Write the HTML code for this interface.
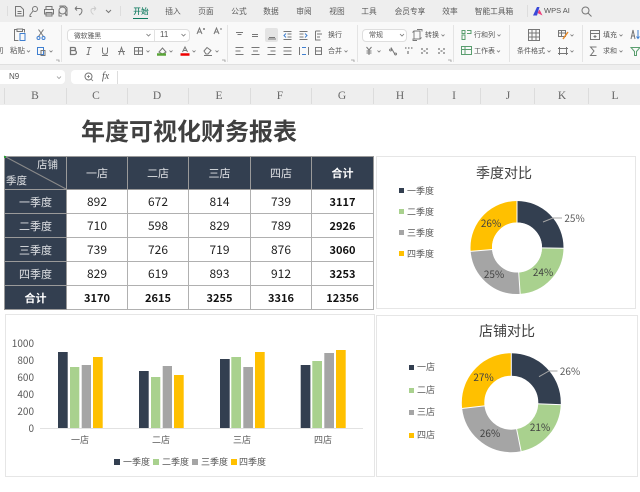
<!DOCTYPE html>
<html><head><meta charset="utf-8">
<style>
html,body{margin:0;padding:0;background:#fff}
body{width:640px;height:492px;overflow:hidden;position:relative;font-family:"Liberation Sans","Noto Sans CJK SC",sans-serif}
.a{position:absolute}
.t{position:absolute;font-family:"Noto Sans CJK SC",sans-serif;white-space:nowrap;line-height:12px;color:#555;font-size:7.5px}
.c{transform:translateX(-50%)}
.tab{top:5.5px;font-size:7.7px;color:#5a5a5a}
.cap{position:absolute;top:88px;height:16px;font:11.5px/17px "Liberation Serif",serif;color:#666;transform:translateX(-50%)}
.v{position:absolute;top:88px;height:16px;width:1px;background:#dcdcdc}
.s{position:absolute;width:1px;top:25px;height:37px;background:#e4e4e4}
table{position:absolute;left:4px;top:156px;border-collapse:collapse;table-layout:fixed;width:369px;font-family:"Noto Sans CJK SC",sans-serif;font-size:12px;color:#222}
td{border:1px solid #b0b0b0;text-align:center;padding:0;height:23px;line-height:14px;background:#fff}
td.h{background:#333f50;color:#dfe1e4;font-size:11px;border-color:#9a9a9a}
td.b{font-weight:700;color:#111;font-size:11px}
td.hb{background:#333f50;color:#fff;font-weight:700;font-size:11px;border-color:#9a9a9a}
.sq{position:absolute}
.lg{font-size:9px;color:#595959;line-height:12px}
.ax{font-size:10px;color:#595959}
.p{font-size:10px;color:#404040}
.box{position:absolute;border:1px solid #e6e6e6;background:#fff;box-sizing:border-box}
svg{position:absolute;overflow:visible}
</style></head><body>

<div class="a" style="left:0;top:0;width:640px;height:22px;background:#eeeeee"></div>
<div class="a" style="left:0;top:22px;width:640px;height:43px;background:#f9f9f9;border-bottom:1px solid #e0e0e0;box-sizing:border-box"></div>
<div class="a" style="left:0;top:65px;width:640px;height:40px;background:#eeeeee"></div>
<div class="a" style="left:0;top:70px;width:65px;height:14px;background:#fff;border-radius:0 4px 4px 0"></div>
<div class="a" style="left:71px;top:70px;width:569px;height:14px;background:#fff;border-radius:4px 0 0 4px"></div>

<!-- quick access icons -->
<svg style="left:0;top:0" width="130" height="22" fill="none" stroke="#777" stroke-width="1">
<path d="M7.5 6v10M120.5 6v10" stroke="#ddd"/>
<path d="M15.5 6.5h5l3 3v6.5h-8zM17.5 11.5h4M17.5 13.5h4"/>
<circle cx="35" cy="9" r="2.5"/><path d="M33 11l-3 4v1.5h1.5"/>
<path d="M46 9V6.5h6V9M44.5 9.5h9v4.500h-9zM46 12.5h6v3.500h-6z"/>
<circle cx="62.5" cy="10.5" r="3.5"/><path d="M60 7V6h5l2 2v7h-2M59 10v6h3M65 13l2 3"/>
<path d="M75 8.5h5c3 0 2.500 5-1 6.500M75 8.5l2-2M75 8.500l2 2"/>
<path d="M96 8.5h-3c-3 0-2.500 4 .5 6M96 8.500l-2-2M96 8.500l-2 2" stroke="#ccc"/>
<path d="M106 10l2.500 2.500 2.500-2.500" stroke="#777"/>
</svg>

<!-- tabs -->
<span class="t tab c" style="left:141px;color:#0f7a5f;font-weight:500">开始</span>
<div class="a" style="left:133px;top:17.500px;width:15px;height:1.500px;background:#0f7a5f"></div>
<span class="t tab c" style="left:173px">插入</span>
<span class="t tab c" style="left:206px">页面</span>
<span class="t tab c" style="left:239px">公式</span>
<span class="t tab c" style="left:271px">数据</span>
<span class="t tab c" style="left:304px">审阅</span>
<span class="t tab c" style="left:337px">视图</span>
<span class="t tab c" style="left:369px">工具</span>
<span class="t tab c" style="left:410px">会员专享</span>
<span class="t tab c" style="left:450px">效率</span>
<span class="t tab c" style="left:494px">智能工具箱</span>
<div class="a" style="left:527px;top:5px;width:1px;height:12px;background:#ddd"></div>
<svg style="left:532px;top:5px" width="12" height="12"><path d="M1 10.500L5 2h2.500L5 10.500z" fill="#3a49d8"/><path d="M5.500 8l2-3.500 3 6z" fill="#ee3f7a"/></svg>
<span class="t" style="left:544px;top:5px;font-size:7.500px;font-family:'Liberation Sans',sans-serif">WPS AI</span>
<svg style="left:580px;top:5px" width="14" height="14" fill="none" stroke="#777"><circle cx="5.500" cy="5.500" r="3.500"/><path d="M8 8l3.500 3.500"/></svg>

<!-- ribbon separators -->
<div class="s" style="left:61px"></div><div class="s" style="left:227px"></div><div class="s" style="left:357px"></div><div class="s" style="left:453px"></div><div class="s" style="left:509px"></div><div class="s" style="left:582px"></div>

<!-- font & number boxes -->
<div class="a" style="left:66.500px;top:28.500px;width:123px;height:13px;background:#fff;border:1px solid #dedede;border-radius:4px;box-sizing:border-box"></div>
<div class="a" style="left:154px;top:29px;width:1px;height:12px;background:#e2e2e2"></div>
<div class="a" style="left:265px;top:28px;width:13px;height:14px;background:#e4e4e4;border-radius:2px"></div>
<div class="a" style="left:362px;top:28.500px;width:45px;height:13px;background:#fff;border:1px solid #dedede;border-radius:4px;box-sizing:border-box"></div>

<span class="t" style="left:-4px;top:45px">切</span>
<span class="t" style="left:10px;top:45px">粘贴</span>
<span class="t" style="left:74px;top:29px;font-size:6.800px">微软雅黑</span>
<span class="t" style="left:160px;top:29px;font-family:'Liberation Sans',sans-serif;font-size:8px">11</span>
<span class="t" style="left:328px;top:29px;font-size:7px">换行</span>
<span class="t" style="left:328px;top:45px;font-size:7px">合并</span>
<span class="t" style="left:369px;top:29px;font-size:7px">常规</span>
<span class="t" style="left:425px;top:29px;font-size:7px">转换</span>
<span class="t" style="left:474px;top:29px;font-size:7px">行和列</span>
<span class="t" style="left:474px;top:45px;font-size:7px">工作表</span>
<span class="t" style="left:517px;top:45px;font-size:7px">条件格式</span>
<span class="t" style="left:603px;top:29px;font-size:7px">填充</span>
<span class="t" style="left:603px;top:45px;font-size:7px">求和</span>

<svg style="left:0;top:0" width="640" height="65" fill="none" stroke="#777" stroke-width="1">
<!-- paste / cut / copy -->
<path d="M17 29.500h-2.500v11h4M22.500 29.500h2v3M17 31.500v-2.500h5.500v2.500z"/><rect x="20" y="33.500" width="5" height="7" stroke="#3f7fd0"/>
<path d="M38.500 29.500l5 7M43.500 29.500l-5 7"/><circle cx="38.500" cy="38" r="1.500" stroke="#3f7fd0"/><circle cx="43.500" cy="38" r="1.500" stroke="#3f7fd0"/>
<rect x="37.500" y="47.500" width="6" height="7" stroke="#3f7fd0"/><path d="M41 50.500h4v5h-4z"/>
<!-- font row 2 -->
<path d="M70.500 47.500h3.500c2 0 2 3 0 3h-3.500zM70.500 50.500h4c2.500 0 2.500 4 0 4h-4z" stroke-width="1.300"/>
<path d="M87 47.500h4.500M89.500 47.500l-1.500 7M86.500 54.500h3"/>
<path d="M102.500 47.500v4c0 3.500 5 3.500 5 0v-4M102 55.500h6"/>
<path d="M118 51.500h7M119 55l2.500-7.500 2.500 7.500"/>
<rect x="134.500" y="47.500" width="8" height="7"/><path d="M138.500 47.500v7M134.500 51h8"/>
<path d="M159 52l3.500-4 3.500 4-3.500 2z"/><path d="M157 54.500h9" stroke="#5aa538" stroke-width="2.500"/>
<path d="M182.500 52l2.500-5 2.500 5M183.500 50.500h3"/><path d="M180.500 54.500h9" stroke="#e00" stroke-width="2.500"/>
<path d="M204 51l3-3.500 4 3-3 3.500h-2zM204 55.500h8"/>
<path d="M197 34l2.500-6 2.500 6M198 32h3M203 29h2M204 28v2"/>
<path d="M214 34l2.500-6 2.500 6M215 32h3M220 29h2"/>
<!-- align -->
<path d="M236 32.500h7M237.500 34.500h4M252 34.500h6M252 36.500h6M269 37.500h6M268 39h8"/>
<path d="M283.500 31.500h8M283.500 39.500h8M287.500 34h4M287.500 37h4"/><path d="M286 33.500l-2 2 2 2" stroke="#3f7fd0"/>
<path d="M299.500 31.500h8M299.500 39.500h8M299.500 34h4M299.500 37h4"/><path d="M305 33.500l2 2-2 2" stroke="#3f7fd0"/>
<path d="M315.500 31h5M315.500 31v9h5M317 34h5M317 37h3"/>
<path d="M235.500 47.500h8M235.500 51h5M235.500 54.500h8M251.500 47.500h8M253 51h5M251.500 54.500h8M267.500 47.500h8M270.500 51h5M267.500 54.500h8M283.500 47.500h8M283.500 51h8M283.500 54.500h8"/>
<path d="M299.500 47v8M308.500 47v8"/><path d="M302 47.500h4M302 54.500h4" stroke="#3f7fd0"/>
<rect x="315.500" y="47.500" width="6" height="7"/><path d="M315.500 51h6"/>
<!-- number -->
<path d="M414 31h6v8h-6zM414 31l-1.500 1.500M420 39l1.500-1.500M417 29.500h5v2M417 40.500h-4v-2" stroke-width=".9"/>
<path d="M366.500 47l2.500 3 2.500-3M369 50v5M366.500 51h5M366.500 53h5"/>
<path d="M391 47.500l4 7M390.500 49a1 1 0 1 0 .1 0M395.500 53a1 1 0 1 0 .1 0"/>
<path d="M405 48h1.500M408 48h1.500M411 48h1.500M408 51v3" stroke-width="1.200"/>
<path d="M421 49h2M426 49h2M421 53h2M426 53h2M423.500 51h2" stroke-width="1.200"/>
<path d="M438 49h2M443 49h2M438 53h2M443 53h2M440.500 51h2" stroke-width="1.200"/>
<!-- rows/cols -->
<path d="M462 30.500h3v3h-3zM467 30.500h4v3h-4M462 35v4.500h3v-4.500z" stroke="#5a9e6f"/>
<path d="M461.500 46.500h10v8h-10zM461.500 49.500h10M465 46.500v8" stroke="#5a9e6f"/>
<!-- conditional -->
<path d="M528.500 29.500h11v11h-11zM528.500 33h11M528.500 37h11M532 29.500v11M536 29.500v11"/>
<path d="M558.500 30.500h7v6h-7zM558.500 33h7M561.500 30.500v6"/><path d="M563 39l5-7" stroke="#e88a2a" stroke-width="1.500"/>
<path d="M559.500 47v8M566.500 47v8M558 48.500h10M558 53.500h10"/>
<!-- fill, sum, sort, filter -->
<path d="M590.500 30.500h9v9h-9zM590.500 33.500h9M595 35v3M593.500 36.500h3"/>
<path d="M594.500 47h-6l3.500 4-3.500 4.500h6" transform="translate(2 0)"/>
<path d="M631 39l2-9 2 9M635 36h-3"/><path d="M638 30v8M636.500 36.500l1.500 2 1.500-2" stroke="#3f7fd0"/>
<path d="M631 47.500h9l-3.500 4v4h-2v-4z" stroke="#5a9e6f"/>
<!-- chevrons -->
<g stroke="#777" stroke-width=".8">
<path d="M146.500 34l2 2 2-2M181.500 34l2 2 2-2M400 34l2 2 2-2"/>
<path d="M27 50.500l1.500 1.500 1.500-1.500M49.500 50.500l1.500 1.500 1.500-1.500M146.500 50.500l1.500 1.500 1.500-1.500M169.500 50.500l1.500 1.500 1.500-1.500M192.500 50.500l1.500 1.500 1.500-1.500M215.500 50.500l1.500 1.500 1.500-1.500M344.500 50.500l1.500 1.500 1.500-1.500M377.500 50.500l1.500 1.500 1.500-1.500M441.500 34.500l1.500 1.500 1.500-1.500M497.500 34.500l1.500 1.500 1.500-1.500M497 50.500l1.500 1.500 1.500-1.500M547.500 50.500l1.500 1.500 1.500-1.500M570.500 34.500l1.500 1.500 1.500-1.500M570.500 50.500l1.500 1.500 1.500-1.500M619.500 34.500l1.500 1.500 1.500-1.500M619.500 50.500l1.500 1.500 1.500-1.500"/>
<path d="M56 60h3v2M222 60h3v2M351 60h3v2M448 60h3v2" stroke="#999"/>
<path d="M57 76.500l2 2 2-2" stroke="#999"/>
</g>
<!-- formula bar -->
<circle cx="88.500" cy="76.500" r="3.500"/><path d="M91 79l2 2M87 76.500h3M88.500 75v3" stroke-width=".8"/>
<path d="M117.500 71v13" stroke="#ddd"/>
</svg>
<span class="t" style="left:9px;top:71px;font-family:'Liberation Sans',sans-serif;font-size:8px">N9</span>
<span class="t" style="left:102px;top:71px;font-family:'Liberation Serif',serif;font-style:italic;font-size:10px">fx</span>

<!-- column headers -->
<div class="v" style="left:4px"></div><div class="v" style="left:66px"></div><div class="v" style="left:127px"></div><div class="v" style="left:188px"></div><div class="v" style="left:250px"></div><div class="v" style="left:311px"></div><div class="v" style="left:373px"></div><div class="v" style="left:427px"></div><div class="v" style="left:480px"></div><div class="v" style="left:534px"></div><div class="v" style="left:588px"></div>
<span class="cap" style="left:35px">B</span><span class="cap" style="left:96px">C</span><span class="cap" style="left:157px">D</span><span class="cap" style="left:219px">E</span><span class="cap" style="left:280px">F</span><span class="cap" style="left:342px">G</span><span class="cap" style="left:400px">H</span><span class="cap" style="left:454px">I</span><span class="cap" style="left:508px">J</span><span class="cap" style="left:562px">K</span><span class="cap" style="left:615px">L</span>

<!-- title -->
<div class="t" style="left:81px;top:115px;font-size:24px;line-height:30px;font-weight:700;color:#404040">年度可视化财务报表</div>

<!-- table -->
<table>
<colgroup><col style="width:62px"><col style="width:61px"><col style="width:61px"><col style="width:62px"><col style="width:61px"><col style="width:62px"></colgroup>
<tr><td class="h" style="height:32px"></td><td class="h">一店</td><td class="h">二店</td><td class="h">三店</td><td class="h">四店</td><td class="hb">合计</td></tr>
<tr><td class="h">一季度</td><td>892</td><td>672</td><td>814</td><td>739</td><td class="b">3117</td></tr>
<tr><td class="h">二季度</td><td>710</td><td>598</td><td>829</td><td>789</td><td class="b">2926</td></tr>
<tr><td class="h">三季度</td><td>739</td><td>726</td><td>719</td><td>876</td><td class="b">3060</td></tr>
<tr><td class="h">四季度</td><td>829</td><td>619</td><td>893</td><td>912</td><td class="b">3253</td></tr>
<tr><td class="hb">合计</td><td class="b">3170</td><td class="b">2615</td><td class="b">3255</td><td class="b">3316</td><td class="b">12356</td></tr>
</table>
<svg style="left:0;top:0" width="80" height="200"><path d="M4 156L66 189" stroke="#8a8a8a"/><path d="M4 156h2v2h-2z" fill="#2e9e3a"/></svg>
<span class="t" style="left:37px;top:159px;font-size:10.500px;color:#dfe1e4">店铺</span>
<span class="t" style="left:6px;top:175px;font-size:10.500px;color:#dfe1e4">季度</span>

<!-- chart boxes -->
<div class="box" style="left:376px;top:156px;width:260px;height:153px"></div>
<div class="box" style="left:376px;top:315px;width:262px;height:162px"></div>
<div class="box" style="left:5px;top:314px;width:370px;height:163px"></div>

<span class="t c" style="left:504px;top:165px;font-size:14px;line-height:16px;color:#404040">季度对比</span>
<div class="sq" style="left:399px;top:188px;width:5px;height:5px;background:#333f50"></div><span class="t lg" style="left:407px;top:185px">一季度</span>
<div class="sq" style="left:399px;top:209px;width:5px;height:5px;background:#a9d18e"></div><span class="t lg" style="left:407px;top:206px">二季度</span>
<div class="sq" style="left:399px;top:230px;width:5px;height:5px;background:#a5a5a5"></div><span class="t lg" style="left:407px;top:227px">三季度</span>
<div class="sq" style="left:399px;top:251px;width:5px;height:5px;background:#ffc000"></div><span class="t lg" style="left:407px;top:248px">四季度</span>
<svg style="left:0;top:0" width="640" height="492" fill="none">
<g stroke-width="21.500" transform="rotate(-90 517 247.500)">
<circle cx="517" cy="247.500" r="35.750" pathLength="100" stroke="#333f50" stroke-dasharray="25.23 74.77"/>
<circle cx="517" cy="247.500" r="35.750" pathLength="100" stroke="#a9d18e" stroke-dasharray="23.68 76.32" stroke-dashoffset="-25.23"/>
<circle cx="517" cy="247.500" r="35.750" pathLength="100" stroke="#a5a5a5" stroke-dasharray="24.77 75.23" stroke-dashoffset="-48.91"/>
<circle cx="517" cy="247.500" r="35.750" pathLength="100" stroke="#ffc000" stroke-dasharray="26.32 73.68" stroke-dashoffset="-73.68"/>
</g>
<g stroke="#fff" stroke-width="1">
<path d="M517 247.500L517 200.500M517 247.500L564 248.200M517 247.500L520.200 294.400M517 247.500L470.200 251.400"/>
</g>
<circle cx="517" cy="247.500" r="25" fill="#fff"/>
<path d="M543 222l10-4h9" stroke="#a6a6a6"/>
<g stroke-width="22.500" transform="rotate(-90 511.300 402.700)">
<circle cx="511.300" cy="402.700" r="38.250" pathLength="100" stroke="#333f50" stroke-dasharray="25.66 74.34"/>
<circle cx="511.300" cy="402.700" r="38.250" pathLength="100" stroke="#a9d18e" stroke-dasharray="21.16 78.84" stroke-dashoffset="-25.66"/>
<circle cx="511.300" cy="402.700" r="38.250" pathLength="100" stroke="#a5a5a5" stroke-dasharray="26.34 73.66" stroke-dashoffset="-46.82"/>
<circle cx="511.300" cy="402.700" r="38.250" pathLength="100" stroke="#ffc000" stroke-dasharray="26.84 73.16" stroke-dashoffset="-73.16"/>
</g>
<g stroke="#fff" stroke-width="1"><path d="M511.300 402.700L511.300 351.700M511.300 402.700L562.300 404.800M511.300 402.700L521.400 452.700M511.300 402.700L460.700 408.600"/></g>
<circle cx="511.300" cy="402.700" r="26.500" fill="#fff"/>
<path d="M539 376.700l10-5.700h8.500" stroke="#a6a6a6"/>
</svg>
<span class="t c p" style="left:574.500px;top:212px;color:#595959">25%</span>
<span class="t c p" style="left:543px;top:266px">24%</span>
<span class="t c p" style="left:494px;top:268px">25%</span>
<span class="t c p" style="left:491px;top:217px">26%</span>

<!-- bar chart -->
<svg style="left:0;top:0" width="380" height="492">
<path d="M40 428.500H363" stroke="#e2e2e2"/>
<g fill="#333f50"><rect x="58" y="352" width="9.700" height="76"/><rect x="139" y="371" width="9.700" height="57"/><rect x="220" y="359" width="9.700" height="69"/><rect x="300.700" y="365" width="9.700" height="63"/></g>
<g fill="#a9d18e"><rect x="70" y="367" width="9.300" height="61"/><rect x="151" y="377" width="9.300" height="51"/><rect x="231.300" y="357" width="9.700" height="71"/><rect x="312.300" y="361" width="9.700" height="67"/></g>
<g fill="#a5a5a5"><rect x="81.700" y="365" width="9.300" height="63"/><rect x="162.700" y="366" width="9.300" height="62"/><rect x="243.300" y="367" width="9.700" height="61"/><rect x="324.300" y="353" width="9.700" height="75"/></g>
<g fill="#ffc000"><rect x="93" y="357" width="9.700" height="71"/><rect x="174" y="375" width="9.700" height="53"/><rect x="255" y="352" width="9.700" height="76"/><rect x="336" y="350" width="9.700" height="78"/></g>
</svg>
<span class="t ax" style="right:606px;top:337px">1000</span>
<span class="t ax" style="right:606px;top:354px">800</span>
<span class="t ax" style="right:606px;top:371px">600</span>
<span class="t ax" style="right:606px;top:388px">400</span>
<span class="t ax" style="right:606px;top:405px">200</span>
<span class="t ax" style="right:606px;top:422px">0</span>
<span class="t c lg" style="left:80px;top:434px">一店</span><span class="t c lg" style="left:161px;top:434px">二店</span><span class="t c lg" style="left:242px;top:434px">三店</span><span class="t c lg" style="left:323px;top:434px">四店</span>
<div class="sq" style="left:114px;top:459px;width:6px;height:6px;background:#333f50"></div><span class="t lg" style="left:123px;top:456px">一季度</span>
<div class="sq" style="left:153px;top:459px;width:6px;height:6px;background:#a9d18e"></div><span class="t lg" style="left:162px;top:456px">二季度</span>
<div class="sq" style="left:192px;top:459px;width:6px;height:6px;background:#a5a5a5"></div><span class="t lg" style="left:201px;top:456px">三季度</span>
<div class="sq" style="left:231px;top:459px;width:6px;height:6px;background:#ffc000"></div><span class="t lg" style="left:239px;top:456px">四季度</span>

<!-- store chart text -->
<span class="t c" style="left:507px;top:323px;font-size:14px;line-height:16px;color:#404040">店铺对比</span>
<div class="sq" style="left:409px;top:365px;width:5px;height:5px;background:#333f50"></div><span class="t lg" style="left:417px;top:361px">一店</span>
<div class="sq" style="left:409px;top:388px;width:5px;height:5px;background:#a9d18e"></div><span class="t lg" style="left:417px;top:384px">二店</span>
<div class="sq" style="left:409px;top:410px;width:5px;height:5px;background:#a5a5a5"></div><span class="t lg" style="left:417px;top:406px">三店</span>
<div class="sq" style="left:409px;top:433px;width:5px;height:5px;background:#ffc000"></div><span class="t lg" style="left:417px;top:429px">四店</span>
<span class="t c p" style="left:570px;top:365px;color:#595959">26%</span>
<span class="t c p" style="left:483.500px;top:371px">27%</span>
<span class="t c p" style="left:540px;top:421px">21%</span>
<span class="t c p" style="left:490px;top:427px">26%</span>
</body></html>
